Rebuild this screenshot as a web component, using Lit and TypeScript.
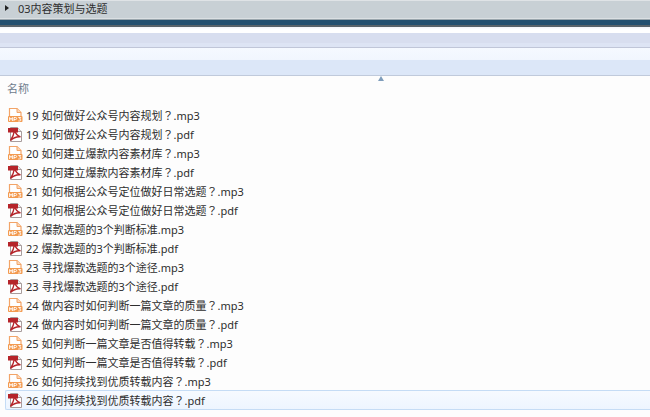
import { LitElement, html, css, svg } from "lit";
import { customElement } from "lit/decorators.js";

const names = [
  "19 如何做好公众号内容规划？.mp3",
  "19 如何做好公众号内容规划？.pdf",
  "20 如何建立爆款内容素材库？.mp3",
  "20 如何建立爆款内容素材库？.pdf",
  "21 如何根据公众号定位做好日常选题？.mp3",
  "21 如何根据公众号定位做好日常选题？.pdf",
  "22 爆款选题的3个判断标准.mp3",
  "22 爆款选题的3个判断标准.pdf",
  "23 寻找爆款选题的3个途径.mp3",
  "23 寻找爆款选题的3个途径.pdf",
  "24 做内容时如何判断一篇文章的质量？.mp3",
  "24 做内容时如何判断一篇文章的质量？.pdf",
  "25 如何判断一篇文章是否值得转载？.mp3",
  "25 如何判断一篇文章是否值得转载？.pdf",
  "26 如何持续找到优质转载内容？.mp3",
  "26 如何持续找到优质转载内容？.pdf",
];

const mp3 = svg`<svg class="ico" width="16" height="16" viewBox="0 0 16 16">
  <path d="M2.5 9.5V1.5H10L14 5.5V9.5" fill="#fff" stroke="#f2a468" stroke-width="1.2"/>
  <path d="M10 1.5V5.5H14" fill="#fdd9b8" stroke="#f2a468" stroke-width="1"/>
  <rect x="1" y="9" width="14.5" height="6" rx="1" fill="#f39a4f"/>
  <path d="M2.6 14V10.5L4 12.5L5.4 10.5V14M7 14V10.5H8.6Q9.6 10.5 9.6 11.5T8.6 12.5H7M11.3 10.5H13.8L12.5 12H13Q14 12.3 13.8 13.2T12.4 14H11.3" fill="none" stroke="#fff" stroke-width=".9"/>
</svg>`;

const pdf = svg`<svg class="ico" width="16" height="16" viewBox="0 0 16 16">
  <path d="M3.5 1.5H10.5L14.5 5.5V15.5H3.5Z" fill="#fff" stroke="#a89d9d"/>
  <path d="M10.5 1.5V5.5H14.5" fill="#e8e8e8" stroke="#a89d9d"/>
  <rect x="1" y="2" width="10" height="4.5" fill="#b5242a"/>
  <path d="M7.6 4C7 8 5.5 11.5 3.5 14.5C6 12 10 10.5 13.5 10.8C10 9.8 8.5 7.5 7.6 4Z" fill="none" stroke="#b5242a" stroke-width="1.4"/>
</svg>`;

function label(n: string) {
  const parts = n.split("？");
  if (parts.length === 1) return html`<span>${n}</span>`;
  return html`<span>${parts[0]}<span class="q">？</span>${parts[1]}</span>`;
}

@customElement("app-root")
export class AppRoot extends LitElement {
  static styles = css`
    :host {
      display: block;
      width: 650px;
      height: 417px;
      overflow: hidden;
      background: #fdfdfd;
      font-family: "Noto Sans", "Noto Sans CJK SC", sans-serif;
    }
    .title {
      height: 18px;
      box-sizing: border-box;
      padding: 0 0 3px 5px;
      border-top: 1px solid #dfe3e6;
      background: #c8d0d5;
      display: flex;
      align-items: center;
      gap: 9px;
      font-size: 11px;
      color: #2e2e2e;
    }
    .tri {
      width: 0;
      height: 0;
      border-left: 4px solid #222;
      border-top: 3.5px solid transparent;
      border-bottom: 3.5px solid transparent;
    }
    .rule-0 { height: 1px; background: #dbe0e3; }
    .rule-a { height: 1px; background: #9aa6ad; }
    .rule-b { height: 5px; background: #24506f; }
    .rule-c { height: 2px; background: #59636a; }
    .band-white { height: 6px; background: linear-gradient(#f4f4f8, #ffffff 40%); }
    .band-l { height: 14px; background: linear-gradient(#d8deef 70%, #dde4f4 71%); }
    .rule-d { height: 1px; background: #c0c6d8; }
    .band-p { height: 12px; background: linear-gradient(#f5f9ff, #f1f6fe); }
    .band-q { height: 15px; background: #dce7f8; }
    .rule-e { height: 1px; background: #c0cadb; }
    .head {
      position: relative;
      height: 29px;
      box-sizing: border-box;
      padding: 0 0 6px 7px;
      display: flex;
      align-items: center;
      font-size: 11px;
      color: #6d7b8c;
    }
    .caret {
      position: absolute;
      left: 378px;
      top: 0;
      width: 0;
      height: 0;
      border-left: 3.5px solid transparent;
      border-right: 3.5px solid transparent;
      border-bottom: 5px solid #7f9dbb;
    }
    .rows { display: flex; flex-direction: column; }
    .row {
      height: 19px;
      box-sizing: border-box;
      display: flex;
      align-items: center;
      gap: 3px;
      padding-left: 7px;
      font-size: 11px;
      color: #2e2e2e;
      white-space: nowrap;
    }
    .row.sel {
      height: 20px;
      margin-left: 5px;
      padding-left: 1px;
      border: 1px solid #c5dcf5;
      border-right: none;
      border-radius: 2px 0 0 2px;
      background: linear-gradient(#f6faff, #edf5ff);
    }
    .q { font-family: "Noto Sans CJK JP", sans-serif; }
    .ico { flex: none; }
  `;

  render() {
    return html`
      <div class="title"><span class="tri"></span><span>03内容策划与选题</span></div>
      <div class="rule-0"></div>
      <div class="rule-a"></div>
      <div class="rule-b"></div>
      <div class="rule-c"></div>
      <div class="band-white"></div>
      <div class="band-l"></div>
      <div class="rule-d"></div>
      <div class="band-p"></div>
      <div class="band-q"></div>
      <div class="rule-e"></div>
      <div class="head"><span class="caret"></span>名称</div>
      <div class="rows">
        ${names.map(
          (n, i) => html`<div class="row ${i === names.length - 1 ? "sel" : ""}">
            ${n.endsWith("mp3") ? mp3 : pdf}${label(n)}
          </div>`
        )}
      </div>
    `;
  }
}
